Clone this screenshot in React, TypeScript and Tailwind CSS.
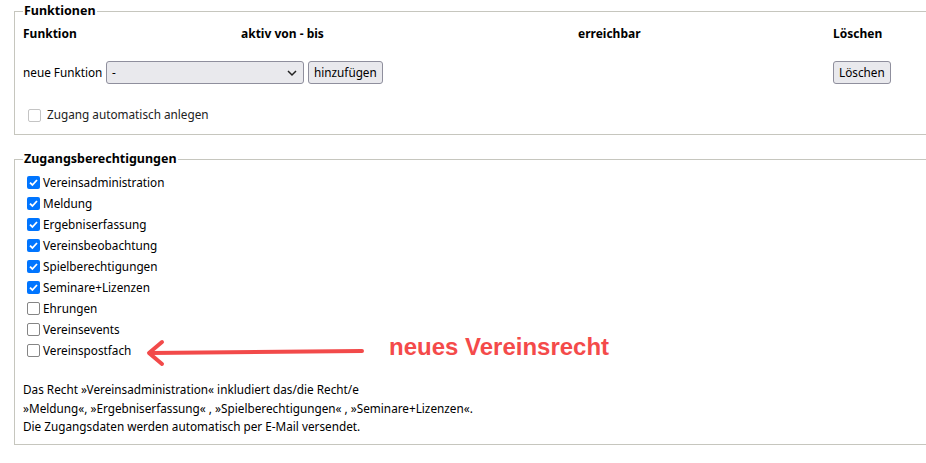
import React from 'react';

const rights = [
  { label: 'Vereinsadministration', checked: true },
  { label: 'Meldung', checked: true },
  { label: 'Ergebniserfassung', checked: true },
  { label: 'Vereinsbeobachtung', checked: true },
  { label: 'Spielberechtigungen', checked: true },
  { label: 'Seminare+Lizenzen', checked: true },
  { label: 'Ehrungen', checked: false },
  { label: 'Vereinsevents', checked: false },
  { label: 'Vereinspostfach', checked: false },
];

const Box: React.FC<{ checked?: boolean }> = ({ checked }) =>
  checked ? (
    <span className="w-[13px] h-[13px] rounded-[2px] bg-[#0075ff] flex items-center justify-center shrink-0">
      <svg width="11" height="11" viewBox="0 0 11 11">
        <path d="M2 5.6 L4.4 8 L9 3" fill="none" stroke="white" strokeWidth="1.8" />
      </svg>
    </span>
  ) : (
    <span className="w-[13px] h-[13px] rounded-[2px] border border-[#858585] bg-white shrink-0" />
  );

const Btn: React.FC<{ children: React.ReactNode }> = ({ children }) => (
  <button className="h-[23px] px-[5px] border border-[#8f8f9d] rounded-[3px] bg-[#e9e9ed] text-[11.75px] leading-none text-black">
    {children}
  </button>
);

export default function App() {
  return (
    <div
      className="w-[926px] h-[463px] overflow-hidden bg-white text-black pt-[2px] text-[11.75px]"
      style={{ fontFamily: '"Noto Sans", "Open Sans", sans-serif' }}
    >
      <fieldset className="ml-[14px] w-[960px] border border-[#c6c6be] pl-[8px] pb-[10px]">
        <legend className="px-[1px] font-bold text-[12.5px] leading-[18px]">Funktionen</legend>
        <div className="grid grid-cols-[218px_337px_255px_100px] font-bold text-[12px] h-[26px] items-center mt-[1px]">
          <div>Funktion</div>
          <div>aktiv von - bis</div>
          <div>erreichbar</div>
          <div>Löschen</div>
        </div>
        <div className="flex items-center h-[23px] mt-[14px]">
          <span className="w-[83px]">neue Funktion</span>
          <div className="relative w-[198px] h-[23px] border border-[#8f8f9d] rounded-[3px] bg-[#e9e9ed] flex items-center pl-[5px]">
            <span>-</span>
            <svg className="absolute right-[6px] top-[7px]" width="10" height="8" viewBox="0 0 10 8">
              <path d="M1 2 L5 6 L9 2" fill="none" stroke="#222" strokeWidth="1.5" />
            </svg>
          </div>
          <span className="ml-[4px] w-[525px]">
            <Btn>hinzufügen</Btn>
          </span>
          <Btn>Löschen</Btn>
        </div>
        <label className="flex items-center gap-[6px] ml-[5px] mt-[22px] h-[18px] text-[#222]">
          <span className="w-[13px] h-[13px] rounded-[2px] border border-[#c4c4c4] bg-white" />
          Zugang automatisch anlegen
        </label>
      </fieldset>

      <fieldset className="relative ml-[14px] mt-[15px] w-[960px] border border-[#c6c6be] pl-[8px] pb-[8px]">
        <legend className="px-[1px] font-bold text-[12.5px] leading-[18px]">Zugangsberechtigungen</legend>
        <div className="flex flex-col mt-[4px]">
          {rights.map((r) => (
            <label key={r.label} className="flex items-center gap-[3px] h-[21px] ml-[4px]">
              <Box checked={r.checked} />
              {r.label}
            </label>
          ))}
        </div>
        <div className="mt-[19px] leading-[18.5px]">
          <div>Das Recht »Vereinsadministration« inkludiert das/die Recht/e</div>
          <div>»Meldung«, »Ergebniserfassung« , »Spielberechtigungen« , »Seminare+Lizenzen«.</div>
          <div>Die Zugangsdaten werden automatisch per E-Mail versendet.</div>
        </div>

        <svg className="absolute left-[130px] top-[171px]" width="222" height="28" viewBox="0 0 222 28">
          <path d="M5 14 L217 12" stroke="#f24a4a" strokeWidth="4" strokeLinecap="round" fill="none" />
          <path d="M17 3 L4 14 L17 25" stroke="#f24a4a" strokeWidth="4" strokeLinecap="round" strokeLinejoin="round" fill="none" />
        </svg>
        <div
          className="absolute left-[374px] top-[167px] text-[24px] font-bold text-[#f44a4a] leading-none"
          style={{ fontFamily: '"Liberation Sans", Arial, sans-serif' }}
        >
          neues Vereinsrecht
        </div>
      </fieldset>
    </div>
  );
}
